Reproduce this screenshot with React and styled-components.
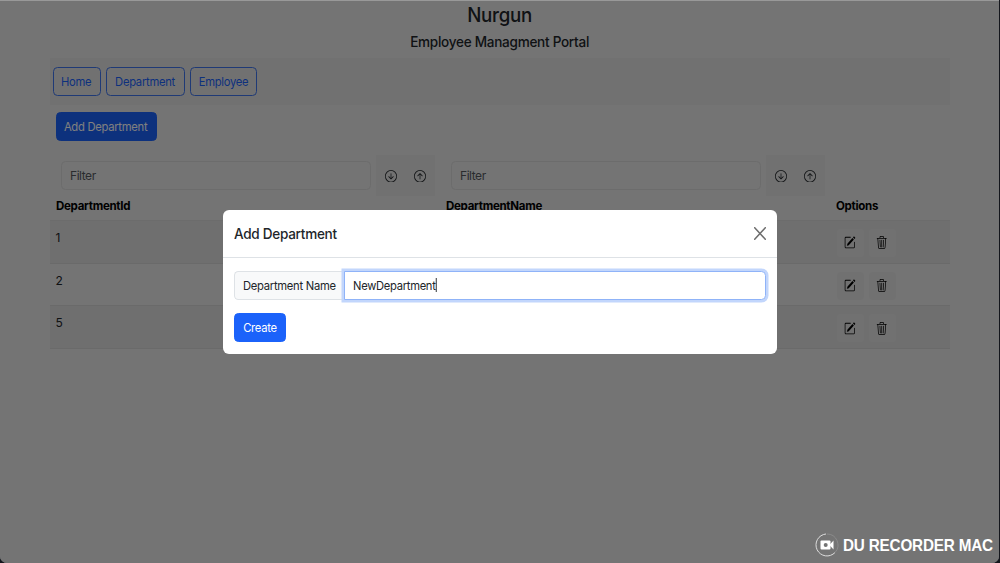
import React, { useState } from "react";
import styled, { createGlobalStyle } from "styled-components";
import {
  BsArrowDownCircle,
  BsArrowUpCircle,
  BsPencilSquare,
  BsTrash3,
} from "react-icons/bs";

const departments = [
  { id: 1, name: "IT" },
  { id: 2, name: "Support" },
  { id: 5, name: "Sales" },
];

function FilterCell() {
  return (
    <FilterGroup>
      <FilterInput placeholder="Filter" />
      <SortButtons>
        <SortButton type="button">
          <BsArrowDownCircle preserveAspectRatio="none" />
        </SortButton>
        <SortButton type="button">
          <BsArrowUpCircle preserveAspectRatio="none" />
        </SortButton>
      </SortButtons>
    </FilterGroup>
  );
}

function DepartmentModal() {
  const [name, setName] = useState("NewDepartment");

  return (
    <Dialog role="dialog">
      <DialogHeader>
        <DialogTitle>
          <Text $left>Add Department</Text>
        </DialogTitle>
        <CloseButton type="button" aria-label="Close">
          <svg viewBox="0 0 12 13" width="12" height="13">
            <path d="M0.7 0.7 11.3 12.3M11.3 0.7 0.7 12.3" />
          </svg>
        </CloseButton>
      </DialogHeader>
      <DialogBody>
        <InputGroup>
          <GroupLabel>
            <Text $left>Department Name</Text>
          </GroupLabel>
          <NameField>
            <Text $left $scale={0.93}>
              {name}
              <Caret />
            </Text>
          </NameField>
        </InputGroup>
        <Button $width="52px" onClick={() => setName(name)}>
          <Text>Create</Text>
        </Button>
      </DialogBody>
    </Dialog>
  );
}

function App() {
  return (
    <>
      <GlobalStyle />
      <Screen>
        <Page>
          <Title>
            <Text>Nurgun</Text>
          </Title>
          <Subtitle>
            <Text>Employee Managment Portal</Text>
          </Subtitle>
          <Navbar>
            <Button $outline $width="48px">
              <Text>Home</Text>
            </Button>
            <Button $outline $width="78.5px">
              <Text>Department</Text>
            </Button>
            <Button $outline $width="67px">
              <Text>Employee</Text>
            </Button>
          </Navbar>
          <Toolbar>
            <Button $width="101px">
              <Text>Add Department</Text>
            </Button>
          </Toolbar>
          <TableHead>
            <HeadCell>
              <FilterCell />
              <Text $left $scale={0.96}>DepartmentId</Text>
            </HeadCell>
            <HeadCell>
              <FilterCell />
              <Text $left $scale={0.96}>DepartmentName</Text>
            </HeadCell>
            <HeadCell>
              <Text $left $scale={0.96}>Options</Text>
            </HeadCell>
          </TableHead>
          {departments.map((dep, index) => (
            <TableRow key={dep.id} $striped={index % 2 === 0}>
              <span>{dep.id}</span>
              <span>{dep.name}</span>
              <Actions>
                <IconButton type="button">
                  <BsPencilSquare preserveAspectRatio="none" />
                </IconButton>
                <IconButton type="button">
                  <BsTrash3 preserveAspectRatio="none" />
                </IconButton>
              </Actions>
            </TableRow>
          ))}
        </Page>
        <Backdrop>
          <DepartmentModal />
        </Backdrop>
        <Watermark>
          <svg viewBox="0 0 24 24" width="24" height="24">
            <path className="ring" d="M11 1A11 11 0 1 0 20 19.5" />
            <path className="ring faint" d="M12 1A11 11 0 0 1 20 19.5" />
            <rect x="5.5" y="7.5" width="10" height="9" rx="1" />
            <path d="M14.5 12 18.5 7.5V16.5Z" />
            <circle cx="10.7" cy="12" r="2" />
          </svg>
          <WatermarkText>
            <Text $left $scale={0.925}>DU RECORDER MAC</Text>
          </WatermarkText>
        </Watermark>
      </Screen>
    </>
  );
}

const GlobalStyle = createGlobalStyle`
  * {
    box-sizing: border-box;
  }
  body {
    margin: 0;
    background: #14161c;
    overflow: hidden;
    font-family: Inter, "Liberation Sans", sans-serif;
    font-size: 12px;
    letter-spacing: -0.3px;
    color: #212529;
  }
  button, input {
    font: inherit;
    letter-spacing: inherit;
  }
`;

//slightly condensed text
const Text = styled.span`
  display: inline-block;
  white-space: nowrap;
  transform: scaleX(${(props) => props.$scale || 0.935});
  transform-origin: ${(props) => (props.$left ? "left" : "center")};
`;

const Screen = styled.div`
  position: relative;
  width: 999px;
  height: 563px;
  overflow: hidden;
  border-radius: 0 0 7px 7px;
  background: #e8e8e8;
`;

const Page = styled.div`
  width: 900px;
  margin-left: 50px;
`;

const Title = styled.h3`
  margin: 0;
  padding-top: 2px;
  height: 32px;
  line-height: 26px;
  font-size: 20px;
  font-weight: 500;
  text-align: center;
`;

const Subtitle = styled.h5`
  margin: 0;
  height: 26px;
  line-height: 20px;
  font-size: 14.5px;
  font-weight: 500;
  text-align: center;
`;

const Navbar = styled.nav`
  display: flex;
  align-items: center;
  gap: 5.5px;
  height: 47px;
  padding-left: 2.5px;
  background: #e3e3e3;
`;

const Toolbar = styled.div`
  height: 49px;
  padding: 6.5px 0 0 5.5px;
`;

const Button = styled.button`
  width: ${(props) => props.$width};
  height: 29.5px;
  padding: 0;
  border: 1px solid ${(props) => (props.$outline ? "#3f74ec" : "#1b62fa")};
  border-radius: 4.5px;
  background: ${(props) => (props.$outline ? "transparent" : "#1b62fa")};
  color: ${(props) => (props.$outline ? "#1b62fa" : "#fff")};
  display: flex;
  align-items: center;
  justify-content: center;
`;

const TableHead = styled.div`
  display: grid;
  grid-template-columns: 390px 390px 120px;
  height: 66.5px;
  border-bottom: 1px solid #d8d8d8;
`;

const HeadCell = styled.div`
  display: flex;
  flex-direction: column;
  justify-content: flex-end;
  padding: 0 5.5px 6px;
  font-weight: 700;
  line-height: 16px;
  color: #000;
`;

const FilterGroup = styled.div`
  display: flex;
  align-items: center;
  height: 41px;
  padding-left: 5.5px;
  margin-bottom: 2px;
  font-weight: 400;
`;

const FilterInput = styled.input`
  width: 309.5px;
  height: 29px;
  padding: 0 8px;
  border: 1px solid #d8d8d8;
  border-radius: 4.5px;
  background: #e8e8e8;
  letter-spacing: -0.45px;

  &::placeholder {
    color: #54585d;
    opacity: 1;
  }
`;

const SortButtons = styled.div`
  display: flex;
  margin-left: 5px;
  height: 41px;
  background: #e3e3e3;
`;

const SortButton = styled.button`
  display: flex;
  align-items: center;
  justify-content: center;
  width: 29.5px;
  padding: 2px 0 0 1px;
  border: none;
  background: transparent;
  color: #212529;

  svg {
    width: 12px;
    height: 12.5px;
  }
`;

const TableRow = styled.div`
  display: grid;
  grid-template-columns: 390px 390px 120px;
  height: ${(props) => (props.$striped ? "43px" : "42.5px")};
  padding: 8px 5.5px 0;
  line-height: 17px;
  border-bottom: 1px solid #d4d4d4;
  background: ${(props) => (props.$striped ? "#dfdfdf" : "#e8e8e8")};
`;

const Actions = styled.div`
  display: flex;
  gap: 5px;
  padding-left: 1px;
`;

const IconButton = styled.button`
  display: flex;
  align-items: center;
  justify-content: center;
  width: 27px;
  height: 28px;
  padding: 0;
  border: none;
  border-radius: 4px;
  background: #e3e3e3;
  color: #000;

  svg {
    width: 11.5px;
    height: 13px;
  }
`;

const Backdrop = styled.div`
  position: absolute;
  inset: 0;
  padding: 208.5px 0 0 223px;
  background: rgba(0, 0, 0, 0.5);
  border-top: 1px solid #999;
`;

const Dialog = styled.div`
  width: 554px;
  height: 144.5px;
  border-radius: 6px;
  background: #fff;
`;

const DialogHeader = styled.div`
  display: flex;
  align-items: center;
  justify-content: space-between;
  height: 48.5px;
  padding: 0 11px;
  border-bottom: 1px solid #dee2e6;
`;

const DialogTitle = styled.span`
  font-size: 14.5px;
  font-weight: 500;
`;

const CloseButton = styled.button`
  display: flex;
  padding: 0;
  border: none;
  background: none;

  path {
    fill: none;
    stroke: #6d6d6d;
    stroke-width: 1.5;
    stroke-linecap: round;
  }
`;

const DialogBody = styled.div`
  padding: 12.5px 11px;
`;

const InputGroup = styled.div`
  display: flex;
  height: 29.5px;
  margin-bottom: 12.5px;
`;

const GroupLabel = styled.span`
  display: flex;
  align-items: center;
  width: 109.5px;
  padding-left: 8px;
  border: 1px solid #dee2e6;
  border-right: none;
  border-radius: 4.5px 0 0 4.5px;
  background: #f8f9fa;
`;

const NameField = styled.div`
  display: flex;
  align-items: center;
  flex: 1;
  padding-left: 8.5px;
  border: 1px solid #8fb3f8;
  border-radius: 0 4.5px 4.5px 0;
  background: #fff;
  box-shadow: 0 0 0 2.5px #c2d6fc;
`;

const Caret = styled.i`
  display: inline-block;
  vertical-align: middle;
  width: 1px;
  height: 14px;
  margin-top: -2px;
  background: #212529;
`;

const Watermark = styled.div`
  position: absolute;
  left: 815px;
  bottom: 6px;
  display: flex;
  align-items: center;
  gap: 4px;
  color: #fff;

  svg {
    fill: #fff;
  }
  .ring {
    fill: none;
    stroke: #ddd;
    stroke-width: 1;
  }
  .faint {
    stroke: #8a8a8a;
  }
  circle {
    fill: #747474;
  }
`;

const WatermarkText = styled.span`
  font-family: "Liberation Sans", Arial, sans-serif;
  font-size: 16.5px;
  font-weight: 700;
  letter-spacing: -0.2px;
`;

export default App;
